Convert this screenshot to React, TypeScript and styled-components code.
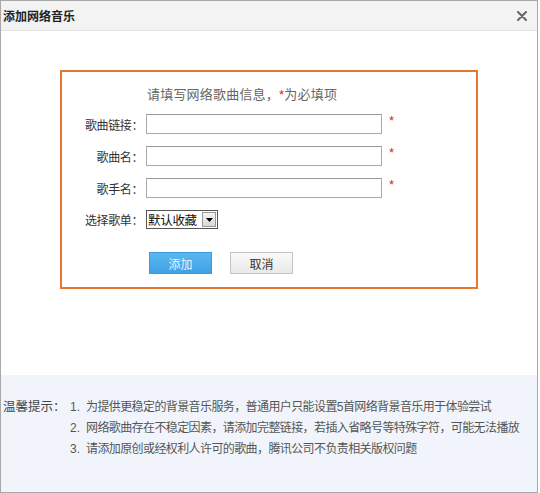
import React from "react";
import styled, { createGlobalStyle } from "styled-components";

const GlobalStyle = createGlobalStyle`
  html, body {
    margin: 0;
    padding: 0;
    background: #fff;
  }
  body {
    font-family: "Liberation Sans", "Noto Sans CJK SC", sans-serif;
  }
`;

const Dialog = styled.div`
  width: 538px;
  height: 493px;
  box-sizing: border-box;
  border: 1px solid #a8a8a8;
  display: flex;
  flex-direction: column;
  background: #fff;
`;

const Header = styled.div`
  height: 29px;
  flex-shrink: 0;
  display: flex;
  align-items: center;
  justify-content: space-between;
  padding: 0 10px 0 2px;
  background: #f3f3f3;
  border-bottom: 1px solid #e3e3e3;
`;

const Title = styled.span`
  font-size: 12px;
  font-weight: 700;
  color: #222;
`;

const CloseButton = styled.span`
  display: flex;
  width: 10px;
  height: 10px;
  cursor: pointer;
`;

const Body = styled.div`
  height: 344px;
  flex-shrink: 0;
  padding: 39px 0 0 59px;
  box-sizing: border-box;
`;

const FormBox = styled.div`
  width: 418px;
  height: 219px;
  box-sizing: border-box;
  border: 2px solid #e8772e;
  padding-top: 14px;
`;

const FormTitle = styled.div`
  margin-left: 85px;
  font-size: 13px;
  line-height: 18px;
  color: #666;
  letter-spacing: 0.2px;
`;

const Star = styled.span`
  color: #d22;
  font-size: 13px;
`;

const Rows = styled.div`
  margin-top: 10px;
  display: grid;
  grid-template-columns: 81px 236px 12px;
  column-gap: 3px;
  row-gap: 12px;
  align-items: center;
`;

const Label = styled.label`
  text-align: right;
  font-size: 12px;
  color: #333;
  letter-spacing: -0.4px;
`;

const TextInput = styled.input`
  height: 20px;
  width: 236px;
  box-sizing: border-box;
  border: 1px solid #a9a9a9;
  border-top-color: #999;
  background: #fff;
  padding: 0 3px;
  outline: none;
`;

const RowStar = styled(Star)`
  padding-left: 4px;
  align-self: start;
  line-height: 14px;
`;

const SelectBox = styled.div`
  width: 72px;
  height: 19px;
  box-sizing: border-box;
  border: 1px solid #555;
  display: flex;
  align-items: center;
  background: #fff;
`;

const SelectText = styled.span`
  flex: 1;
  font-size: 12.5px;
  color: #111;
  padding-left: 1px;
  white-space: nowrap;
  letter-spacing: -0.3px;
`;

const SelectArrow = styled.span`
  width: 14px;
  height: 15px;
  margin-right: 1px;
  box-sizing: border-box;
  border: 1px solid #999;
  background: linear-gradient(#f4f4f4, #d8d8d8);
  display: flex;
  align-items: center;
  justify-content: center;
`;

const Buttons = styled.div`
  margin: 23px 0 0 87px;
  display: flex;
  gap: 18px;
`;

const Button = styled.button<{ $primary?: boolean }>`
  width: 63px;
  height: 22px;
  padding: 0;
  font-family: inherit;
  font-size: 12px;
  cursor: pointer;
  border: 1px solid ${(p) => (p.$primary ? "#3d9ad8" : "#c4c4c4")};
  color: ${(p) => (p.$primary ? "#e8f4fd" : "#333")};
  background: ${(p) =>
    p.$primary
      ? "linear-gradient(#5bb7f0, #3fa2e6)"
      : "linear-gradient(#fafafa, #e9e9e9)"};
`;

const Tips = styled.div`
  flex: 1;
  background: #f1f5fb;
  padding: 22px 0 0 2px;
  display: flex;
  font-size: 12px;
  line-height: 21px;
  color: #555;
`;

const TipsLabel = styled.div`
  width: 67px;
  flex-shrink: 0;
  font-size: 12.5px;
  color: #444;
`;

const TipList = styled.ol`
  margin: 0;
  padding: 0;
  list-style: none;
`;

const TipItem = styled.li`
  display: flex;
  white-space: nowrap;
  letter-spacing: -0.6px;
`;

const TipNum = styled.span`
  width: 16px;
  flex-shrink: 0;
  letter-spacing: 0;
`;

const tips = [
  "为提供更稳定的背景音乐服务，普通用户只能设置5首网络背景音乐用于体验尝试",
  "网络歌曲存在不稳定因素，请添加完整链接，若插入省略号等特殊字符，可能无法播放",
  "请添加原创或经权利人许可的歌曲，腾讯公司不负责相关版权问题",
];

const fields = [
  { id: "link", label: "歌曲链接：" },
  { id: "name", label: "歌曲名：" },
  { id: "singer", label: "歌手名：" },
];

const App: React.FC = () => {
  return (
    <>
      <GlobalStyle />
      <Dialog>
        <Header>
          <Title>添加网络音乐</Title>
          <CloseButton>
            <svg width="10" height="10" viewBox="0 0 10 10">
              <path
                d="M1 1 L9 9 M9 1 L1 9"
                stroke="#666"
                strokeWidth="2"
                strokeLinecap="round"
              />
            </svg>
          </CloseButton>
        </Header>
        <Body>
          <FormBox>
            <FormTitle>
              请填写网络歌曲信息，<Star>*</Star>为必填项
            </FormTitle>
            <Rows>
              {fields.map((field) => (
                <React.Fragment key={field.id}>
                  <Label htmlFor={field.id}>{field.label}</Label>
                  <TextInput id={field.id} />
                  <RowStar>*</RowStar>
                </React.Fragment>
              ))}
              <Label>选择歌单：</Label>
              <SelectBox>
                <SelectText>默认收藏</SelectText>
                <SelectArrow>
                  <svg width="7" height="4" viewBox="0 0 7 4">
                    <path d="M0 0 L7 0 L3.5 4 Z" fill="#000" />
                  </svg>
                </SelectArrow>
              </SelectBox>
              <span />
            </Rows>
            <Buttons>
              <Button $primary>添加</Button>
              <Button>取消</Button>
            </Buttons>
          </FormBox>
        </Body>
        <Tips>
          <TipsLabel>温馨提示：</TipsLabel>
          <TipList>
            {tips.map((tip, i) => (
              <TipItem key={i}>
                <TipNum>{i + 1}.</TipNum>
                {tip}
              </TipItem>
            ))}
          </TipList>
        </Tips>
      </Dialog>
    </>
  );
};

export default App;
